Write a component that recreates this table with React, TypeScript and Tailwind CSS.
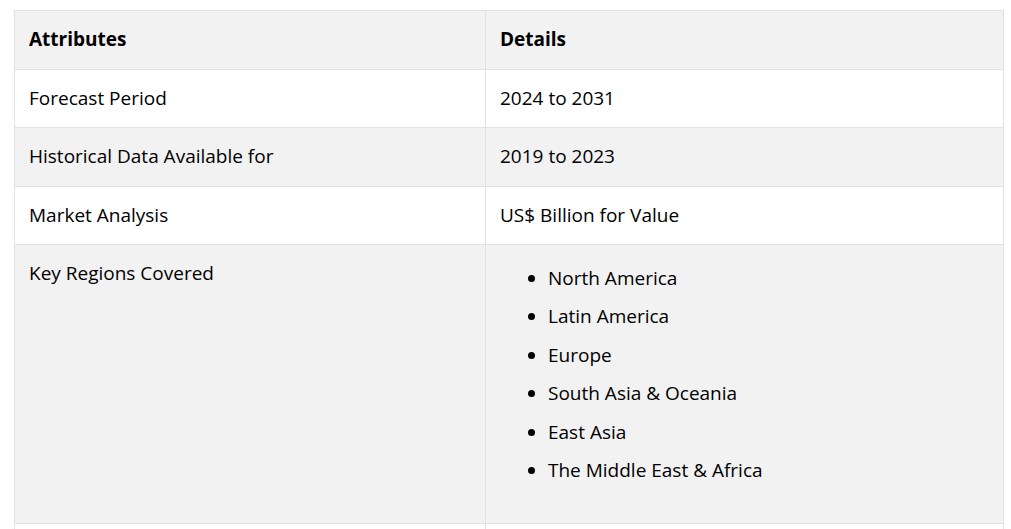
import React from 'react';

const rows: [string, string][] = [
    ['Forecast Period', '2024 to 2031'],
    ['Historical Data Available for', '2019 to 2023'],
    ['Market Analysis', 'US$ Billion for Value'],
];

const regions = ['North America', 'Latin America', 'Europe', 'South Asia & Oceania', 'East Asia', 'The Middle East & Africa'];

const App = () => {
    return (
        <div className="bg-white w-[1011px] h-[529px] overflow-hidden pt-[10px] pl-[14px]" style={{ fontFamily: '"Open Sans", sans-serif' }}>
            <table className="w-[990px] border-collapse text-[19px] leading-[27.5px] text-black">
                <thead>
                    <tr className="bg-[#f2f2f2]">
                        <th className="w-[471px] border border-[#e2e2e2] px-[14px] py-[15px] text-left font-bold">Attributes</th>
                        <th className="border border-[#e2e2e2] px-[14px] py-[15px] text-left font-bold">Details</th>
                    </tr>
                </thead>
                <tbody>
                    {rows.map((r, i) => (
                        <tr key={i} className={i % 2 === 0 ? 'bg-white' : 'bg-[#f2f2f2]'}>
                            <td className="border border-[#e2e2e2] px-[14px] py-[15px] align-top">{r[0]}</td>
                            <td className="border border-[#e2e2e2] px-[14px] py-[15px] align-top">{r[1]}</td>
                        </tr>
                    ))}
                    <tr className="bg-[#f2f2f2]">
                        <td className="border border-[#e2e2e2] px-[14px] py-[15px] align-top">Key Regions Covered</td>
                        <td className="border border-[#e2e2e2] px-[14px] py-[15px] align-top">
                            <ul className="list-disc pl-[48px] -mt-[1px] mb-[18px]">
                                {regions.map((g) => (
                                    <li key={g} className="py-[5.5px]">{g}</li>
                                ))}
                            </ul>
                        </td>
                    </tr>
                    <tr className="bg-white">
                        <td className="border border-[#e2e2e2] px-[14px] py-[15px]">&nbsp;</td>
                        <td className="border border-[#e2e2e2] px-[14px] py-[15px]">&nbsp;</td>
                    </tr>
                </tbody>
            </table>
        </div>
    );
};

export default App;
